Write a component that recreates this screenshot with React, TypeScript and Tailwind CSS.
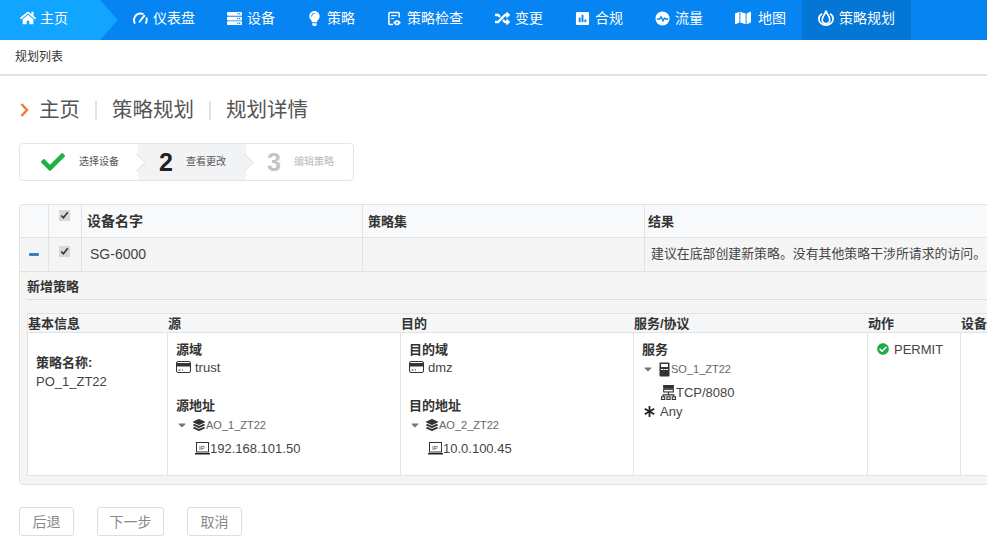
import type { ReactNode } from "react";
import {
  FaAsterisk,
  FaCaretDown,
  FaCheck,
  FaCheckCircle,
  FaHome,
  FaLayerGroup,
  FaLightbulb,
  FaMap,
  FaPoll,
  FaRandom,
  FaServer,
} from "react-icons/fa";

const GaugeIcon = () => (
  <svg width="15" height="14" viewBox="0 0 16 14" fill="none" stroke="white">
    <path d="M2.200 13A7 7 0 0 1 8 2.200c1.300 0 2.300.3 3.200.8M14.300 6.500c.6 2 .3 4.700-.9 6.500" strokeWidth="2" />
    <path d="M7 11l5-6.500" strokeWidth="2" strokeLinecap="round" />
  </svg>
);

const CheckIcon = () => (
  <svg width="15" height="15" viewBox="0 0 16 16" fill="none" stroke="white">
    <path d="M13 7V2.500a1 1 0 0 0-1-1H3a1 1 0 0 0-1 1v11a1 1 0 0 0 1 1h3.500" strokeWidth="1.600" />
    <path d="M4.500 5h6M4.500 8h3" strokeWidth="1.300" />
    <path d="M7 12.500c1-1.600 2.200-2.400 3.700-2.400s2.700.8 3.800 2.400c-1.100 1.600-2.300 2.400-3.800 2.400S8 14.100 7 12.500z" fill="white" strokeWidth="0.600" />
    <circle cx="10.700" cy="12.500" r="1" fill="#0584f2" stroke="none" />
  </svg>
);

const PulseIcon = () => (
  <svg width="15" height="15" viewBox="0 0 16 16">
    <circle cx="8" cy="8" r="7.500" fill="white" />
    <path d="M2 8.500h3l1.500-2.500 2 4.500 1.500-3 1 1h3" fill="none" stroke="#0584f2" strokeWidth="1.400" />
  </svg>
);

const FlameIcon = () => (
  <svg width="16" height="16" viewBox="0 0 16 16" fill="none" stroke="white" strokeWidth="1.700">
    <path d="M4 3.800C1.700 5.200.8 7.300.9 9.300c.2 3.300 3.200 5.800 7.100 5.800s6.900-2.500 7.100-5.800c.1-2-.8-4.100-3.100-5.500" />
    <path d="M8 .8C7.300 3.800 4.200 6.300 4.200 9.800 4.200 12 5.900 13.700 8 13.700s3.800-1.700 3.800-3.900C11.800 6.300 8.700 3.800 8 .8z" />
  </svg>
);

const CardIcon = () => (
  <svg width="15" height="12" viewBox="0 0 15 12" fill="none" stroke="#333" className="shrink-0">
    <rect x="0.500" y="0.500" width="14" height="11" rx="1.500" />
    <rect x="0.500" y="2.500" width="14" height="2.500" fill="#333" />
    <path d="M2.500 9h2M6 9h1" />
  </svg>
);

const IpIcon = () => (
  <svg width="15" height="13" viewBox="0 0 15 13" className="shrink-0">
    <rect x="1.500" y="0.500" width="12" height="9.500" fill="white" stroke="#333" />
    <text x="4" y="7.500" fontSize="6" fontFamily="Liberation Sans" fill="#333">IP</text>
    <rect x="0" y="11" width="15" height="1.500" fill="#222" />
  </svg>
);

const NetIcon = () => (
  <svg width="15" height="15" viewBox="0 0 14 14" fill="none" stroke="#333" className="shrink-0">
    <rect x="2.500" y="0.500" width="9" height="2.500" fill="#333" />
    <rect x="2.500" y="4" width="9" height="2.500" />
    <path d="M7 6.500v3M2 11V9.200h10V11" />
    <rect x="0.500" y="11" width="3" height="2.500" />
    <rect x="5.500" y="11" width="3" height="2.500" />
    <rect x="10.500" y="11" width="3" height="2.500" />
  </svg>
);

const SoIcon = () => (
  <svg width="11" height="15" viewBox="0 0 11 15" className="shrink-0">
    <rect x="0.500" y="0.500" width="10" height="14" rx="1" fill="#333" />
    <rect x="2" y="2" width="7" height="3" fill="white" />
    <path d="M2 7.500h2M4.500 7.500h2M7 7.500h2" stroke="white" />
  </svg>
);

const navItems: { label: string; icon: ReactNode; active?: boolean; wide?: boolean }[] = [
  { label: "仪表盘", icon: <GaugeIcon /> },
  { label: "设备", icon: <FaServer size={15} /> },
  { label: "策略", icon: <FaLightbulb size={15} /> },
  { label: "策略检查", icon: <CheckIcon /> },
  { label: "变更", icon: <FaRandom size={15} /> },
  { label: "合规", icon: <FaPoll size={15} /> },
  { label: "流量", icon: <PulseIcon /> },
  { label: "地图", icon: <FaMap size={16} />, wide: true },
  { label: "策略规划", icon: <FlameIcon />, active: true },
];

const Cb = () => (
  <input type="checkbox" defaultChecked readOnly className="w-[11px] h-[11px] accent-[#d8d8d8] m-0" />
);

const TreeRow = ({ icon, label }: { icon: ReactNode; label: string }) => (
  <div className="flex items-center h-[20px] text-[11px] text-[#666]">
    <FaCaretDown size={12} className="text-[#777] mr-[4px]" />
    <span className="mr-[1px] ml-[1px] text-[#333]">{icon}</span>
    {label}
  </div>
);

const App = () => {
  return (
    <div
      className="w-[987px] h-[537px] overflow-hidden bg-white text-[#333] text-[13px] leading-none"
      style={{ fontFamily: '"Liberation Sans", "Noto Sans CJK SC", sans-serif' }}
    >
      <nav className="h-[40px] bg-[#0584f2] flex text-white text-[14px]">
        <div className="relative w-[100px] bg-[#12a5ff] flex items-center pl-[20px] pb-[4px] gap-[4px] mr-[17px]">
          <FaHome size={16} />
          <span>主页</span>
          <div className="absolute left-full top-0 border-y-[20px] border-y-transparent border-l-[18px] border-l-[#12a5ff]" />
        </div>
        {navItems.map((item) => (
          <div
            key={item.label}
            className={`flex items-center px-[16px] pb-[4px] ${item.wide ? "gap-[7px]" : "gap-[5px]"} ${item.active ? "bg-[#0376d6]" : ""}`}
          >
            {item.icon}
            <span>{item.label}</span>
          </div>
        ))}
      </nav>

      <div className="h-[36px] border-b-2 border-[#e3e3e3] flex items-center pl-[15px] text-[12px]">规划列表</div>

      <div className="flex items-center h-[24px] mt-[22px] ml-[20px] text-[20.500px] text-[#555]">
        <svg width="9" height="14" viewBox="0 0 9 14" fill="none" stroke="#f07a2e" strokeWidth="2.400" className="mr-[10px]">
          <path d="M1.500 1l5.500 6-5.500 6" />
        </svg>
        <span>主页</span>
        <span className="w-[2px] h-[19px] bg-[#e2e2e2] mx-[15px]" />
        <span>策略规划</span>
        <span className="w-[2px] h-[19px] bg-[#e2e2e2] mx-[15px]" />
        <span>规划详情</span>
      </div>

      <div className="flex w-[335px] h-[38px] ml-[19px] mt-[21px] border border-[#e5e5e5] rounded-[4px] text-[10px]">
        <div className="relative w-[118px] flex items-center pl-[21px] gap-[14px] text-[#555]">
          <FaCheck size={24} className="text-[#1fb141]" />
          <span>选择设备</span>
          <div className="absolute z-10 right-[-5px] top-[12px] w-[13px] h-[13px] rotate-45 bg-white border-t border-r border-[#e5e5e5]" />
        </div>
        <div className="relative w-[108px] bg-[#f2f3f5] flex items-center pl-[21px] gap-[13px] text-[#555]">
          <span className="text-[25px] font-bold text-[#222]">2</span>
          <span>查看更改</span>
          <div className="absolute z-10 right-[-5px] top-[12px] w-[13px] h-[13px] rotate-45 bg-[#f2f3f5] border-t border-r border-[#e5e5e5]" />
        </div>
        <div className="flex-1 flex items-center pl-[21px] gap-[13px] text-[#bbb]">
          <span className="text-[25px] font-bold text-[#c4c4c4]">3</span>
          <span>编辑策略</span>
        </div>
      </div>

      <div className="w-[1100px] ml-[19px] mt-[23px] border border-[#e3e3e3] rounded-t-[3px] rounded-b-[4px] bg-[#f5f5f5]">
        <div className="flex h-[33px] bg-[#f8f9fa] border-b border-[#e3e3e3] font-bold text-[14px]">
          <div className="w-[29px] border-r border-[#e3e3e3]" />
          <div className="w-[33px] border-r border-[#e3e3e3] flex justify-center pt-[5px] pr-[2px]"><Cb /></div>
          <div className="w-[281px] border-r border-[#e3e3e3] flex items-center pl-[5px]">设备名字</div>
          <div className="w-[282px] border-r border-[#e3e3e3] flex items-center pl-[5px] text-[13px]">策略集</div>
          <div className="flex-1 flex items-center pl-[3px] text-[13px]">结果</div>
        </div>
        <div className="flex h-[34px] bg-[#f5f5f5] border-b border-[#e3e3e3] text-[14px] text-[#444]">
          <div className="w-[29px] border-r border-[#e3e3e3] flex items-center justify-center">
            <span className="w-[10px] h-[3px] rounded-[1px] bg-[#3d7fc4]" />
          </div>
          <div className="w-[33px] border-r border-[#e3e3e3] flex justify-center pt-[8px] pr-[2px]"><Cb /></div>
          <div className="w-[281px] border-r border-[#e3e3e3] flex items-center pl-[8px] pb-px">SG-6000</div>
          <div className="w-[282px] border-r border-[#e3e3e3]" />
          <div className="flex-1 flex items-center pl-[6px] text-[12.900px] whitespace-nowrap">建议在底部创建新策略。没有其他策略干涉所请求的访问。</div>
        </div>

        <div className="pl-[7px] pb-[8px]">
          <div className="h-[28px] border-b border-[#ddd] flex items-center font-bold text-[13px] pt-px">新增策略</div>
          <div className="mt-[13px] border border-[#e3e3e3] bg-white">
            <div className="flex h-[19px] bg-[#f5f6f7] border-b border-[#e3e3e3] font-bold text-[13px] items-center">
              <div className="w-[140px]">基本信息</div>
              <div className="w-[233px]">源</div>
              <div className="w-[233px]">目的</div>
              <div className="w-[234px]">服务/协议</div>
              <div className="w-[93px]">动作</div>
              <div className="flex-1">设备</div>
            </div>
            <div className="flex h-[142px] text-[13px]">
              <div className="w-[140px] border-r border-[#e3e3e3] pl-[8px] pt-[23px]">
                <div className="font-bold h-[16px]">策略名称:</div>
                <div className="text-[#444] h-[19px] flex items-center">PO_1_ZT22</div>
              </div>
              <div className="w-[233px] border-r border-[#e3e3e3] pl-[8px] pt-[10px]">
                <div className="font-bold h-[16px]">源域</div>
                <div className="flex items-center gap-[4px] h-[16px] text-[#444]"><CardIcon />trust</div>
                <div className="font-bold h-[16px] mt-[24px]">源地址</div>
                <TreeRow icon={<FaLayerGroup size={12} />} label="AO_1_ZT22" />
                <div className="flex items-center ml-[19px] mt-[3px] h-[20px] text-[13px] text-[#444]"><IpIcon />192.168.101.50</div>
              </div>
              <div className="w-[233px] border-r border-[#e3e3e3] pl-[8px] pt-[10px]">
                <div className="font-bold h-[16px]">目的域</div>
                <div className="flex items-center gap-[4px] h-[16px] text-[#444]"><CardIcon />dmz</div>
                <div className="font-bold h-[16px] mt-[24px]">目的地址</div>
                <TreeRow icon={<FaLayerGroup size={12} />} label="AO_2_ZT22" />
                <div className="flex items-center ml-[19px] mt-[3px] h-[20px] text-[13px] text-[#444]"><IpIcon />10.0.100.45</div>
              </div>
              <div className="w-[234px] border-r border-[#e3e3e3] pl-[8px] pt-[10px]">
                <div className="font-bold h-[16px]">服务</div>
                <TreeRow icon={<SoIcon />} label="SO_1_ZT22" />
                <div className="flex items-center ml-[19px] mt-[3px] h-[20px] text-[13px] text-[#444]"><NetIcon />TCP/8080</div>
                <div className="flex items-center gap-[5px] h-[18px] text-[13px] text-[#444]">
                  <FaAsterisk size={11} className="text-[#222] ml-[2px]" />Any
                </div>
              </div>
              <div className="w-[93px] border-r border-[#e3e3e3] pl-[9px] pt-[8px]">
                <div className="flex items-center gap-[5px] h-[16px] text-[#444]">
                  <FaCheckCircle size={12} className="text-[#22a94a]" />PERMIT
                </div>
              </div>
            </div>
          </div>
        </div>
      </div>

      <div className="flex ml-[19px] mt-[22px] gap-[23px] text-[14px] text-[#888]">
        <div className="w-[55px] h-[29px] border border-[#ddd] rounded-[3px] flex items-center justify-center">后退</div>
        <div className="w-[67px] h-[29px] border border-[#ddd] rounded-[3px] flex items-center justify-center">下一步</div>
        <div className="w-[55px] h-[29px] border border-[#ddd] rounded-[3px] flex items-center justify-center">取消</div>
      </div>
    </div>
  );
};

export default App;
